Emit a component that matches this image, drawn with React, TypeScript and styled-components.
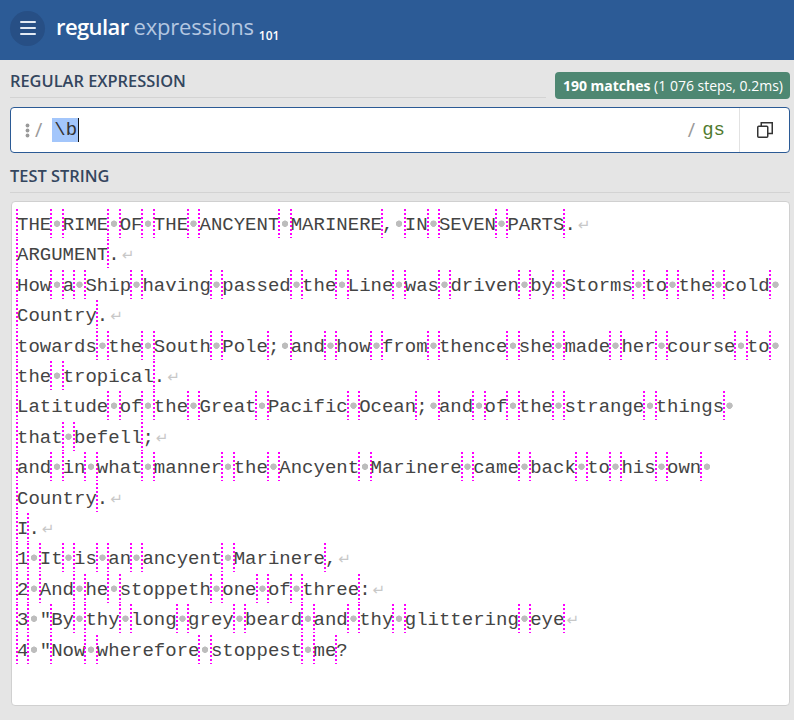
import React from "react";
import styled, { createGlobalStyle } from "styled-components";

const Global = createGlobalStyle`
  html, body { margin: 0; padding: 0; background: #e5e5e5; }
  body { font-family: "Open Sans", "Noto Sans", sans-serif; }
  * { box-sizing: border-box; }
`;

const Header = styled.header`
  height: 60px;
  background: #2c5b96;
  display: flex;
  align-items: center;
  padding: 0 10px;
`;

const MenuButton = styled.div`
  width: 35px;
  height: 35px;
  border-radius: 50%;
  background: #274f85;
  display: flex;
  flex-direction: column;
  align-items: center;
  justify-content: center;
  gap: 4px;
  margin-bottom: 4px;
`;

const MenuLine = styled.span`
  display: block;
  width: 16px;
  height: 2px;
  background: #e3eaf4;
  border-radius: 1px;
`;

const Title = styled.div`
  margin-left: 11px;
  margin-bottom: -2px;
  font-size: 22px;
  line-height: 30px;
  white-space: nowrap;
`;

const TitleStrong = styled.span`
  color: #ffffff;
  font-weight: 600;
  letter-spacing: -0.6px;
`;

const TitleLight = styled.span`
  color: #b4c7e1;
  font-weight: 400;
  margin-left: 5px;
  letter-spacing: -0.2px;
`;

const TitleSub = styled.span`
  color: #ffffff;
  font-size: 12px;
  font-weight: 600;
  margin-left: 5px;
  vertical-align: -5px;
`;

const Main = styled.main`
  padding: 0 4px 0 10px;
`;

const SectionRow = styled.div<{ $top: number }>`
  display: flex;
  align-items: flex-end;
  gap: 9px;
  margin-top: ${(p) => p.$top}px;
`;

const SectionLabel = styled.div`
  flex: 1;
  font-size: 16.4px;
  line-height: 22px;
  font-weight: 600;
  color: #34465e;
  text-transform: uppercase;
  padding-bottom: 5px;
  border-bottom: 1px solid #d3d3d3;
`;

const Badge = styled.div`
  height: 27px;
  margin-bottom: -1px;
  padding: 0 7px 0 8px;
  border-radius: 4px;
  background: #4e8772;
  color: #ffffff;
  font-size: 14px;
  line-height: 27px;
  white-space: nowrap;
  b { font-weight: 700; }
`;

const RegexBox = styled.div`
  margin-top: 9px;
  height: 46px;
  background: #ffffff;
  border: 1px solid #2b5a95;
  border-radius: 4px;
  display: flex;
  align-items: center;
`;

const Grip = styled.svg`
  margin-left: 14px;
  flex: none;
`;

const Delim = styled.span`
  font-family: "Open Sans", sans-serif;
  font-size: 20px;
  color: #9a9a9a;
  line-height: 1;
`;

const RegexInput = styled.div`
  flex: 1;
  display: flex;
  align-items: center;
  margin-left: 10px;
  font-family: "Liberation Mono", monospace;
  font-size: 19px;
  color: #333;
`;

const Selected = styled.span`
  background: #a3c6fb;
  line-height: 24px;
  padding: 0 1px 0 2px;
`;

const Caret = styled.span`
  display: inline-block;
  width: 1px;
  height: 24px;
  background: #111;
`;

const Flags = styled.span`
  font-family: "Liberation Mono", monospace;
  font-size: 19px;
  color: #4f7a2e;
  margin-left: 7px;
  margin-right: 14px;
`;

const CopyCell = styled.div`
  width: 50px;
  align-self: stretch;
  border-left: 1px solid #e2e2e2;
  display: flex;
  align-items: center;
  justify-content: center;
`;

const TestBox = styled.div`
  margin-top: 8px;
  margin-left: 1px;
  height: 505px;
  background: #ffffff;
  border: 1px solid #d0d0d0;
  border-radius: 4px;
  padding: 8px 14px 0 5px;
  font-family: "Liberation Mono", monospace;
  font-size: 19px;
  line-height: 30.4px;
  color: #444;
`;

const Line = styled.div`
  white-space: pre-wrap;
`;

const Group = styled.span`
  white-space: nowrap;
`;

const Space = styled.span`
  white-space: pre-wrap;
  background: radial-gradient(circle 4px at 50% 44%, #bdbdbd 2.9px, transparent 3.5px);
`;

const Boundary = styled.span`
  display: inline-block;
  width: 2px;
  height: 29px;
  vertical-align: top;
  margin: -1px -1px 0;
  background: repeating-linear-gradient(to bottom, #ff00ff 0 2px, transparent 2px 4px);
`;

const Eol = styled.span`
  font-family: "DejaVu Sans", sans-serif;
  font-size: 15px;
  color: #c8c8c8;
  margin-left: 2px;
`;

const TEXT = [
  "THE RIME OF THE ANCYENT MARINERE, IN SEVEN PARTS.",
  "ARGUMENT.",
  "How a Ship having passed the Line was driven by Storms to the cold Country.",
  "towards the South Pole; and how from thence she made her course to the tropical.",
  "Latitude of the Great Pacific Ocean; and of the strange things that befell;",
  "and in what manner the Ancyent Marinere came back to his own Country.",
  "I.",
  "1 It is an ancyent Marinere,",
  "2 And he stoppeth one of three:",
  '3 "By thy long grey beard and thy glittering eye',
  '4 "Now wherefore stoppest me?',
];

const isWord = (c: string | undefined) => !!c && /\w/.test(c);

function renderLine(line: string, last: boolean) {
  const out: React.ReactNode[] = [];
  let i = 0;
  let key = 0;
  while (i < line.length) {
    if (line[i] === " ") {
      out.push(<Space key={key++}> </Space>);
      i++;
      continue;
    }
    let e = i;
    while (e < line.length && line[e] !== " ") e++;
    const parts: React.ReactNode[] = [];
    let buf = "";
    for (let j = i; j <= e; j++) {
      if (isWord(line[j - 1]) !== isWord(line[j])) {
        if (buf) parts.push(buf);
        buf = "";
        parts.push(<Boundary key={"b" + j} />);
      }
      if (j < e) buf += line[j];
    }
    if (buf) parts.push(buf);
    if (!last && e === line.length) parts.push(<Eol key="eol">↵</Eol>);
    out.push(<Group key={key++}>{parts}</Group>);
    i = e;
  }
  return out;
}

export default function App() {
  return (
    <>
      <Global />
      <Header>
        <MenuButton>
          <MenuLine />
          <MenuLine />
          <MenuLine />
        </MenuButton>
        <Title>
          <TitleStrong>regular</TitleStrong>
          <TitleLight>expressions</TitleLight>
          <TitleSub>101</TitleSub>
        </Title>
      </Header>
      <Main>
        <SectionRow $top={10}>
          <SectionLabel>Regular Expression</SectionLabel>
          <Badge>
            <b>190 matches</b> (1 076 steps, 0.2ms)
          </Badge>
        </SectionRow>
        <RegexBox>
          <Grip width="5" height="15" viewBox="0 0 5 15">
            <circle cx="2.5" cy="2.5" r="1.9" fill="#9a9a9a" />
            <circle cx="2.5" cy="7.5" r="1.9" fill="#9a9a9a" />
            <circle cx="2.5" cy="12.5" r="1.9" fill="#9a9a9a" />
          </Grip>
          <Delim style={{ marginLeft: 5 }}>/</Delim>
          <RegexInput>
            <Selected>\b</Selected>
            <Caret />
          </RegexInput>
          <Delim>/</Delim>
          <Flags>gs</Flags>
          <CopyCell>
            <svg width="18" height="18" viewBox="0 0 18 18" fill="none" stroke="#333" strokeWidth="1.5">
              <rect x="1.75" y="5.25" width="10" height="11" rx="1" />
              <path d="M5.25 5 V1.75 H16.25 V12.5 H12" />
            </svg>
          </CopyCell>
        </RegexBox>
        <SectionRow $top={12}>
          <SectionLabel>Test String</SectionLabel>
        </SectionRow>
        <TestBox>
          {TEXT.map((l, idx) => (
            <Line key={idx}>{renderLine(l, idx === TEXT.length - 1)}</Line>
          ))}
        </TestBox>
      </Main>
    </>
  );
}
